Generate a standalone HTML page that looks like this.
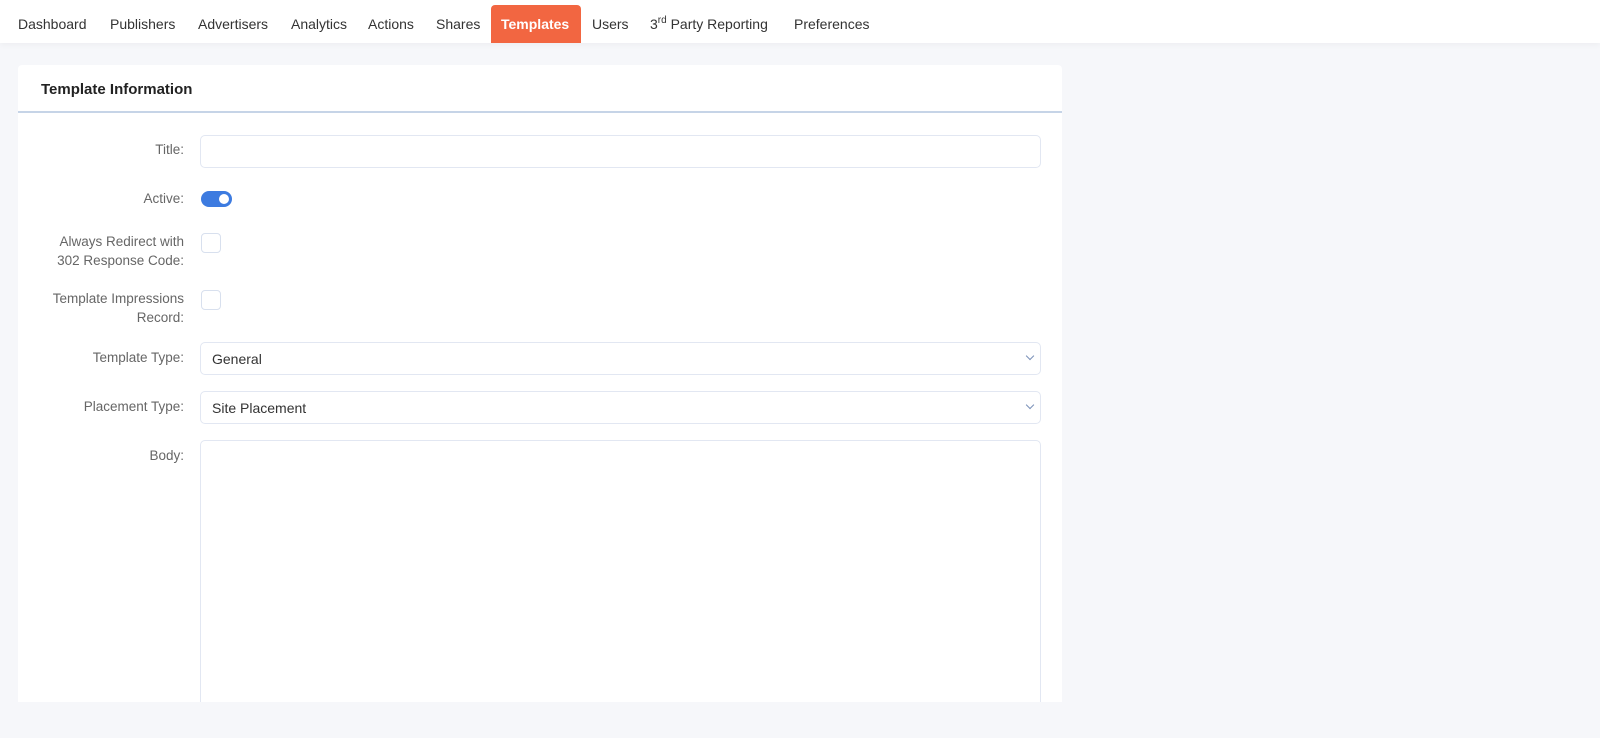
<!DOCTYPE html>
<html><head><meta charset="utf-8"><style>
*{box-sizing:border-box;margin:0;padding:0}
body{width:1600px;height:738px;background:#f6f7fa;font-family:"Liberation Sans",sans-serif;font-size:14px;color:#333;position:relative;overflow:hidden}
.nav{position:absolute;left:0;top:0;width:1600px;height:43px;background:#fff;box-shadow:0 2px 6px rgba(0,0,0,0.04)}
.nav span{position:absolute;top:16px;font-size:14px;color:#333;white-space:nowrap}
.nav sup{font-size:10px;line-height:0;vertical-align:6px}
.nav .act{top:5px;height:38px;background:#f26641;color:#fff;font-weight:bold;border-radius:4px 4px 0 0;padding:11px 10px 0;left:491px;width:90px}
.card{position:absolute;left:18px;top:65px;width:1044px;height:637px;background:#fff;border-radius:4px 4px 0 0;overflow:hidden}
.hd{height:48px;border-bottom:2px solid #c6d4e7;padding:16px 0 0 23px;font-weight:bold;font-size:15px;color:#222}
.lbl{position:absolute;right:878px;text-align:right;color:#666;font-size:13.5px;line-height:19px;white-space:nowrap}
.in{position:absolute;left:182px;width:841px;height:33px;border:1px solid #e2e7f2;border-radius:5px;padding:8px 11px;font-size:14px;color:#333}
.cb{position:absolute;left:183px;width:20px;height:20px;border:1px solid #d8e0ee;border-radius:4px}
.chev{position:absolute;right:7px;top:10px;width:6px;height:6px;border-right:1.5px solid #7a90b8;border-bottom:1.5px solid #7a90b8;transform:rotate(45deg)}
</style></head><body>
<div class="nav">
<span style="left:18px">Dashboard</span>
<span style="left:110px">Publishers</span>
<span style="left:198px">Advertisers</span>
<span style="left:291px">Analytics</span>
<span style="left:368px">Actions</span>
<span style="left:436px">Shares</span>
<span class="act">Templates</span>
<span style="left:592px">Users</span>
<span style="left:650px">3<sup>rd</sup> Party Reporting</span>
<span style="left:794px">Preferences</span>
</div>
<div class="card">
<div class="hd">Template Information</div>
<div class="lbl" style="top:75px">Title:</div>
<div class="in" style="top:70px"></div>
<div class="lbl" style="top:124px">Active:</div>
<div style="position:absolute;left:183px;top:126px;width:31px;height:16px;border-radius:8px;background:#3d7be0"><div style="position:absolute;right:3px;top:3px;width:10px;height:10px;border-radius:50%;background:#fff"></div></div>
<div class="lbl" style="top:167px">Always Redirect with<br>302 Response Code:</div>
<div class="cb" style="top:168px"></div>
<div class="lbl" style="top:224px">Template Impressions<br>Record:</div>
<div class="cb" style="top:225px"></div>
<div class="lbl" style="top:283px">Template Type:</div>
<div class="in" style="top:277px">General<div class="chev"></div></div>
<div class="lbl" style="top:332px">Placement Type:</div>
<div class="in" style="top:326px">Site Placement<div class="chev"></div></div>
<div class="lbl" style="top:381px">Body:</div>
<div class="in" style="top:375px;height:280px"></div>
</div>
</body></html>
